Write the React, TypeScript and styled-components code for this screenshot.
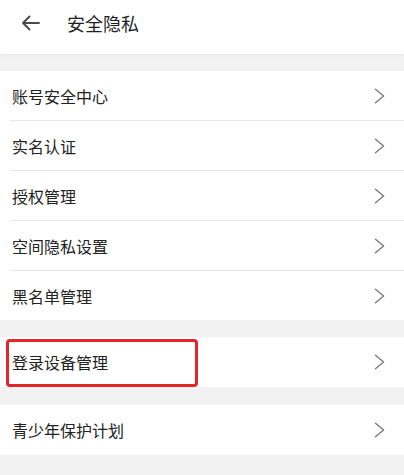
import React from "react";
import styled, { createGlobalStyle } from "styled-components";

const Global = createGlobalStyle`
  html, body { margin: 0; padding: 0; background: #f2f2f2; }
  body { font-family: "Noto Sans CJK SC", "Noto Sans", sans-serif; -webkit-font-smoothing: antialiased; }
`;

const Page = styled.div`
  width: 404px;
  min-height: 475px;
  background: #f2f2f2;
  display: flex;
  flex-direction: column;
`;

const Header = styled.header`
  height: 54px;
  background: #fff;
  display: flex;
  align-items: center;
  padding-left: 21px;
  gap: 27px;
  box-shadow: 0 1px 3px rgba(0, 0, 0, 0.06);
  position: relative;
  z-index: 1;
`;

const BackBtn = styled.span`
  width: 19px;
  height: 16px;
  display: flex;
  align-items: center;
  justify-content: center;
  margin-top: -8px;
`;

const Title = styled.h1`
  margin: 0;
  margin-top: -8px;
  font-size: 18px;
  font-weight: 400;
  color: #1f1f1f;
  letter-spacing: 0;
`;

const Group = styled.section<{ $top: number }>`
  margin-top: ${(p) => p.$top}px;
  background: #fff;
  display: flex;
  flex-direction: column;
`;

const Row = styled.div<{ $h: number }>`
  position: relative;
  height: ${(p) => p.$h}px;
  display: flex;
  align-items: center;
  justify-content: space-between;
  padding: 0 18px 0 12px;
`;

const Label = styled.span`
  font-size: 16px;
  color: #222;
  line-height: 1;
`;

const Divider = styled.div`
  height: 1px;
  margin-left: 10px;
  background: #e6e6e6;
`;

const Highlight = styled.div`
  position: absolute;
  left: 6px;
  top: 2px;
  width: 192px;
  height: 48px;
  box-sizing: border-box;
  border: 3px solid #e3262a;
  border-radius: 4px;
  pointer-events: none;
`;

const Chevron = () => (
  <svg width="12" height="16" viewBox="0 0 12 16" fill="none">
    <path d="M1.5 1.2 L9.6 8 L1.5 14.8" stroke="#7a7a7a" strokeWidth="1.4" strokeLinecap="round" strokeLinejoin="round" />
  </svg>
);

const BackArrow = () => (
  <svg width="19" height="16" viewBox="0 0 19 16" fill="none">
    <path d="M18 8 H2.5 M8.5 1.5 L2 8 L8.5 14.5" stroke="#4a4a4a" strokeWidth="1.9" strokeLinecap="round" strokeLinejoin="round" />
  </svg>
);

const group1 = ["账号安全中心", "实名认证", "授权管理", "空间隐私设置", "黑名单管理"];

export default function App() {
  return (
    <Page>
      <Global />
      <Header>
        <BackBtn>
          <BackArrow />
        </BackBtn>
        <Title>安全隐私</Title>
      </Header>
      <Group $top={17}>
        {group1.map((t, i) => (
          <React.Fragment key={t}>
            <Row $h={49}>
              <Label>{t}</Label>
              <Chevron />
            </Row>
            {i < group1.length - 1 && <Divider />}
          </React.Fragment>
        ))}
      </Group>
      <Group $top={17}>
        <Row $h={50}>
          <Label>登录设备管理</Label>
          <Chevron />
          <Highlight />
        </Row>
      </Group>
      <Group $top={18}>
        <Row $h={50}>
          <Label>青少年保护计划</Label>
          <Chevron />
        </Row>
      </Group>
    </Page>
  );
}
